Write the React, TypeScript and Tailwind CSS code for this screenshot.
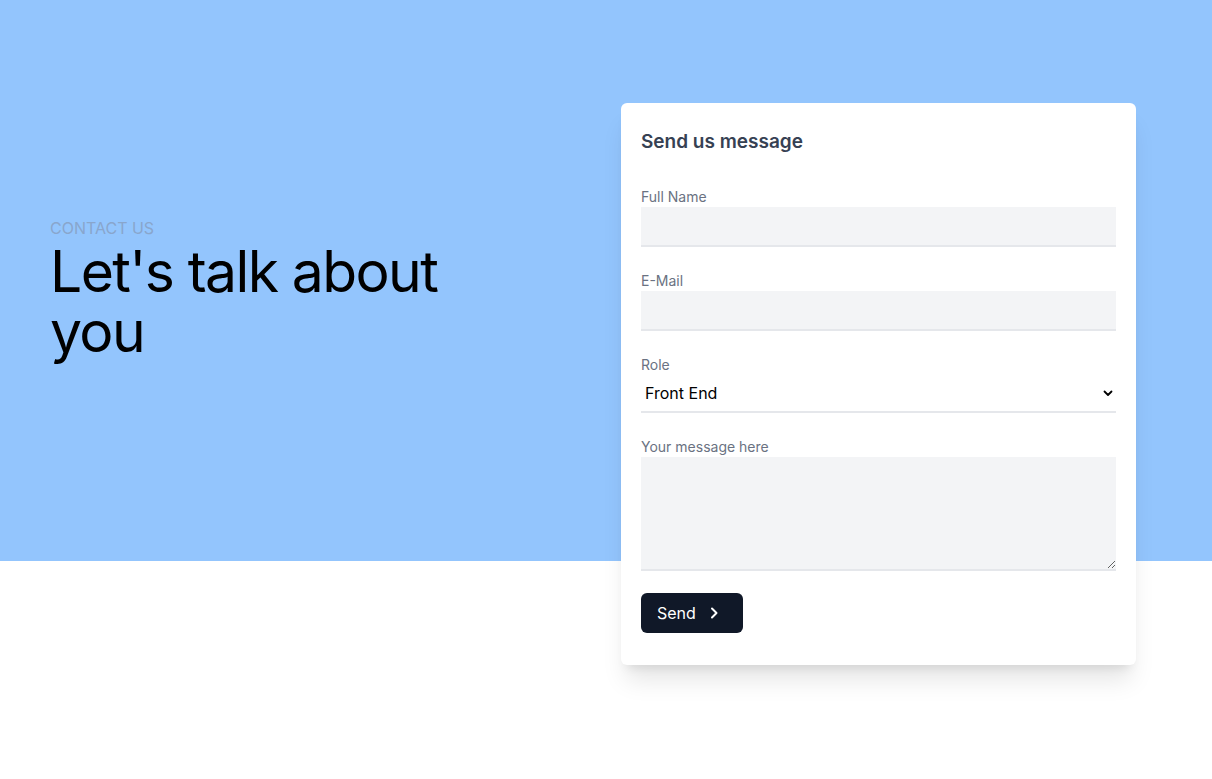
import React from "react";

export default function App() {
  return (
    <div
      className="min-h-[779px] bg-white"
      style={{ fontFamily: "Inter, 'Noto Sans', sans-serif" }}
    >
      <div className="flex h-[561px] items-start bg-[#93c5fd] pl-[50px] pr-[76px]">
        <div className="flex-1 self-center pt-[16px]">
          <p className="text-base leading-6 uppercase text-[#89a6cc]">Contact us</p>
          <h1 className="mt-[2px] w-[480px] text-[57px] leading-[60px] tracking-[-1.6px] text-black">
            Let's talk about you
          </h1>
        </div>
        <div className="mt-[103px] w-[515px] rounded-md bg-white px-5 pt-[25px] pb-8 shadow-xl">
          <h2 className="text-[19px] leading-7 font-semibold text-gray-700">Send us message</h2>
          <div className="mt-[31px] flex flex-col gap-6">
            <div>
              <label className="block text-sm leading-5 text-gray-500">Full Name</label>
              <input
                type="text"
                className="block h-10 w-full border-b-2 border-gray-200 bg-gray-100 px-2 outline-none"
              />
            </div>
            <div>
              <label className="block text-sm leading-5 text-gray-500">E-Mail</label>
              <input
                type="email"
                className="block h-10 w-full border-b-2 border-gray-200 bg-gray-100 px-2 outline-none"
              />
            </div>
            <div>
              <label className="block text-sm leading-5 text-gray-500">Role</label>
              <div className="relative">
                <select className="block h-[38px] w-full appearance-none border-b-2 border-gray-200 bg-white pl-1 text-base text-black outline-none">
                  <option>Front End</option>
                </select>
                <svg
                  className="pointer-events-none absolute top-[13px] right-[3px]"
                  width="10"
                  height="10"
                  viewBox="0 0 10 10"
                  fill="none"
                  stroke="black"
                  strokeWidth="1.8"
                  strokeLinecap="round"
                  strokeLinejoin="round"
                >
                  <path d="M1.5 3.5 L5 7 L8.5 3.5" />
                </svg>
              </div>
            </div>
            <div>
              <label className="block text-sm leading-5 text-gray-500">Your message here</label>
              <textarea className="block h-[114px] w-full border-b-2 border-gray-200 bg-gray-100 px-2 outline-none" />
            </div>
          </div>
          <button className="mt-[22px] flex h-10 items-center gap-[13px] rounded-md bg-gray-900 pl-4 pr-[24px] text-base text-white">
            Send
            <svg
              width="10"
              height="14"
              viewBox="0 0 10 14"
              fill="none"
              stroke="white"
              strokeWidth="2"
              strokeLinecap="round"
              strokeLinejoin="round"
            >
              <path d="M3 2.5 L7.5 7 L3 11.5" />
            </svg>
          </button>
        </div>
      </div>
    </div>
  );
}
